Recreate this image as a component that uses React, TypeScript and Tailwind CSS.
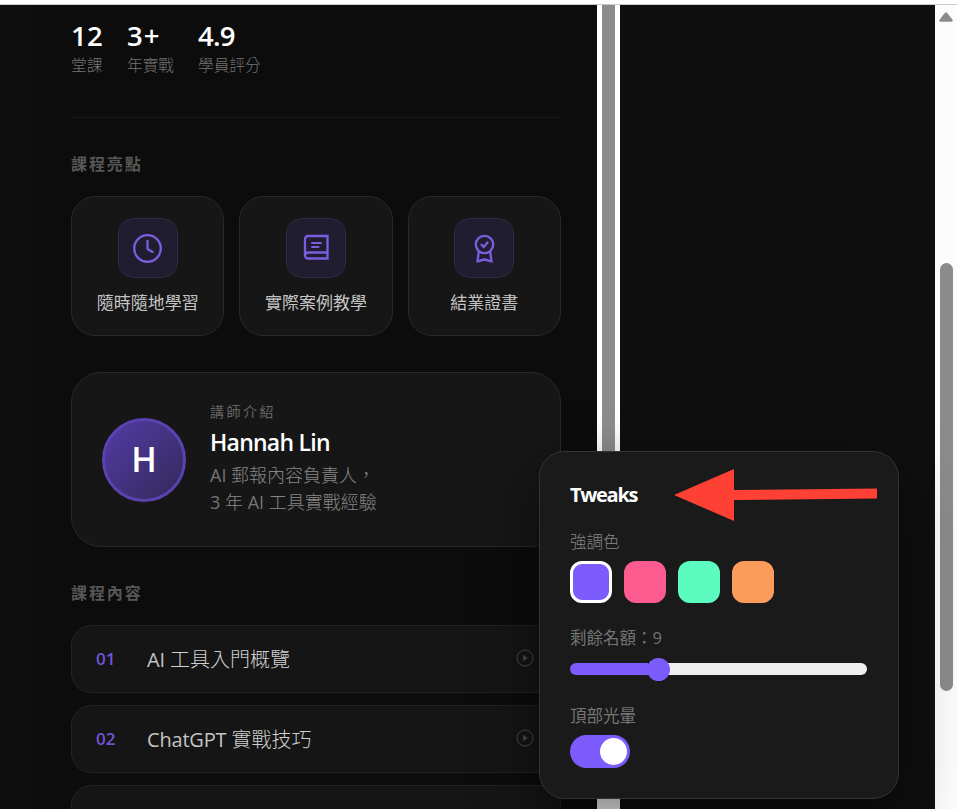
import React from "react";

const latin = "font-['Open_Sans','Noto_Sans_CJK_TC',sans-serif]";

const stats = [
  { value: "12", label: "堂課", box: "w-[31px]", track: "tracking-[0.2px]" },
  { value: "3+", label: "年實戰", box: "w-[46px]", track: "tracking-[1px]" },
  { value: "4.9", label: "學員評分", box: "w-[63px]", track: "tracking-[-0.8px]" },
];

const lessons = [
  { no: "01", latinPart: "AI", title: " 工具入門概覽" },
  { no: "02", latinPart: "ChatGPT", title: " 實戰技巧" },
];

const swatches = [
  "bg-[#7c5cfc] border-white",
  "bg-[#fb5b8f] border-[#fb5b8f]",
  "bg-[#5cfcc0] border-[#5cfcc0]",
  "bg-[#fb9c5c] border-[#fb9c5c]",
];

function ClockIcon() {
  return (
    <svg width="36" height="36" viewBox="0 0 36 36" fill="none" stroke="#7a5ee0" strokeWidth="2.3" strokeLinecap="round" strokeLinejoin="round">
      <circle cx="17.5" cy="18.5" r="13.3" />
      <path d="M17.5 11v8l5 2.9" />
    </svg>
  );
}

function BookIcon() {
  return (
    <svg width="36" height="36" viewBox="0 0 36 36" fill="none" stroke="#7a5ee0" strokeWidth="2.3" strokeLinecap="round" strokeLinejoin="miter">
      <path d="M7 25.5V9a3 3 0 0 1 3-3h19.500v22.500H10a3 3 0 0 1-3-3a3 3 0 0 1 3-3h19.500" />
      <path d="M14 13h9M14 17h6.500" strokeWidth="2" />
    </svg>
  );
}

function AwardIcon() {
  return (
    <svg width="36" height="36" viewBox="0 0 36 36" fill="none" stroke="#7a5ee0" strokeWidth="2.3" strokeLinecap="round" strokeLinejoin="miter">
      <circle cx="18.500" cy="14.500" r="8.700" />
      <path d="M12.700 22l-1.200 9.300c2.200 0 4.600-1.600 7-1.800 2.400.2 4.800 1.800 7 1.800l-1.200-9.300" />
      <path d="M15.500 14.800l2.200 2.200 3.900-4.500" strokeWidth="2.300" />
    </svg>
  );
}

const highlights = [
  { icon: <ClockIcon />, label: "隨時隨地學習" },
  { icon: <BookIcon />, label: "實際案例教學" },
  { icon: <AwardIcon />, label: "結業證書" },
];

function SectionTitle({ children }: { children: React.ReactNode }) {
  return <h2 className="h-6 text-[16px] leading-6 font-bold tracking-[1.9px] text-[#575757]">{children}</h2>;
}

function CourseColumn() {
  return (
    <main className="flex w-[564px] shrink-0 flex-col overflow-hidden bg-[#0c0c0c] pr-[36px] pl-[38px]">
      <div className="flex h-[113px] shrink-0 gap-[25px] border-b border-[#191919] pt-[15px]">
        {stats.map((s) => (
          <div key={s.label} className={`${s.box} whitespace-nowrap`}>
            <div className={`h-[32px] text-[27.5px] leading-[32px] font-semibold text-white ${s.track}`}>{s.value}</div>
            <div className="mt-px text-[15.700px] leading-6 font-light text-[#747474]">{s.label}</div>
          </div>
        ))}
      </div>

      <div className="mt-[34px] shrink-0">
        <SectionTitle>課程亮點</SectionTitle>
        <div className="mt-5 grid grid-cols-3 gap-[15px]">
          {highlights.map((h) => (
            <div key={h.label} className="flex h-[140px] flex-col items-center rounded-[24px] border border-[#292929] bg-[#161616] pt-[21px]">
              <div className="flex size-[60px] items-center justify-center rounded-[16px] border border-[#302943] bg-[#211d31]">{h.icon}</div>
              <div className="mt-[13px] text-[17px] leading-6 text-[#c4c4c4]">{h.label}</div>
            </div>
          ))}
        </div>
      </div>

      <section className="mt-9 flex h-[175px] shrink-0 items-center gap-6 rounded-[30px] border border-[#292929] bg-[#161616] px-[30px]">
        <div className="flex size-[84px] items-center justify-center rounded-full border-[3px] border-[#5a43b0] bg-linear-135 from-[#533ba7] to-[#33295a] text-[34px] font-semibold text-white">
          H
        </div>
        <div className="pb-[3px] whitespace-nowrap">
          <div className="h-6 text-[14px] leading-6 tracking-[2.500px] text-[#646464]">講師介紹</div>
          <div className="h-9 text-[23px] leading-9 font-semibold tracking-[-0.750px] text-white">Hannah Lin</div>
          <div className="mt-[2px] text-[18px] leading-[27px] font-light text-[#868686]">
            <div>
              <span className="font-normal text-[#747474]">AI</span> 郵報內容負責人，
            </div>
            <div>
              <span className="font-normal text-[#747474]">3</span> 年 <span className="font-normal text-[#747474]">AI</span> 工具實戰經驗
            </div>
          </div>
        </div>
      </section>

      <div className="mt-[34px] shrink-0">
        <SectionTitle>課程內容</SectionTitle>
        <ol className="mt-5 flex flex-col gap-3">
          {lessons.map((l) => (
            <li key={l.no} className="flex h-[68px] items-center rounded-[20px] border border-[#232323] bg-[#151515] pr-[26px] pl-6">
              <span className="w-[51px] text-[17px] font-semibold text-[#7054d4]">{l.no}</span>
              <span className="flex-1 pt-[2px] text-[20px] font-light whitespace-pre text-[#d0d0d0]">
                <span className="font-normal tracking-[-0.200px] text-[#c4c4c4]">{l.latinPart}</span>
                {l.title}
              </span>
              <svg className="-mt-[3px]" width="18" height="18" viewBox="0 0 18 18" fill="none" stroke="#3c3c3c" strokeWidth="1.300">
                <circle cx="9" cy="9" r="8" />
                <path d="M7 5.800v6.400L12 9z" fill="#484848" stroke="none" />
              </svg>
            </li>
          ))}
          <li className="h-[68px] rounded-[20px] border border-[#232323] bg-[#151515]" />
        </ol>
      </div>
    </main>
  );
}

function TweaksPanel() {
  return (
    <aside className="absolute top-[451px] left-[539px] h-[348px] w-[360px] rounded-[26px] border border-[#333] bg-[#1a1a1a] px-[30px] pt-[27px] shadow-[0_24px_60px_rgba(0,0,0,0.5)]">
      <div className="h-8 text-[20px] leading-8 font-bold tracking-[-1.300px] text-white">Tweaks</div>
      <div className="mt-[19px] h-6 text-[16.500px] leading-6 font-light text-[#868686]">強調色</div>
      <div className="mt-[7px] flex gap-3">
        {swatches.map((s) => (
          <button key={s} className={`size-[42px] rounded-[12px] border-[3px] ${s}`} />
        ))}
      </div>
      <div className="mt-[23px] h-6 text-[16.500px] leading-6 text-[#747474]">剩餘名額：9</div>
      <div className="mt-[7px] flex h-6 w-[297px] items-center">
        <div className="h-3 w-[78px] rounded-l-full bg-[#7c5cfc]" />
        <div className="z-10 -mx-px size-[23px] rounded-full bg-[#7c5cfc]" />
        <div className="-ml-2 h-3 flex-1 rounded-r-full bg-[#efefef]" />
      </div>
      <div className="mt-[23px] h-6 text-[16.500px] leading-6 text-[#747474]">頂部光暈</div>
      <div className="mt-[7px] flex h-[33px] w-[60px] items-center justify-end rounded-full bg-[#7c5cfc] pr-[3px]">
        <div className="size-[27px] rounded-full bg-white" />
      </div>
      <svg className="absolute top-[16px] left-[134px]" width="204" height="54" viewBox="0 0 204 54">
        <path d="M0 27L60 1V22L203 20.500V30.500L60 32V53Z" fill="#ff4035" />
      </svg>
    </aside>
  );
}

export default function App() {
  return (
    <div className={`relative flex h-[809px] w-[957px] flex-col overflow-hidden bg-white ${latin}`}>
      <div className="h-[5px] shrink-0 border-b border-[#c9c9c9] bg-white" />
      <div className="flex min-h-0 flex-1">
        <div className="w-[33px] shrink-0 bg-[#0f0f0f]" />
        <CourseColumn />
        <div className="flex w-[23px] shrink-0 justify-center bg-white">
          <div className="h-[700px] w-[13px] bg-[#8c8c8c]" />
        </div>
        <div className="w-[315px] shrink-0 bg-[#0f0f0f]" />
        <div className="flex flex-1 flex-col items-center bg-[#fcfcfc] pt-[6px]">
          <svg width="16" height="12" viewBox="0 0 16 12">
            <path d="M8 2.500L13.500 9.500H2.500Z" fill="#8b8b8b" stroke="#8b8b8b" strokeWidth="2.500" strokeLinejoin="round" />
          </svg>
          <div className="mt-[240px] h-[428px] w-[13px] rounded-full bg-[#8b8b8b]" />
        </div>
      </div>
      <TweaksPanel />
    </div>
  );
}
